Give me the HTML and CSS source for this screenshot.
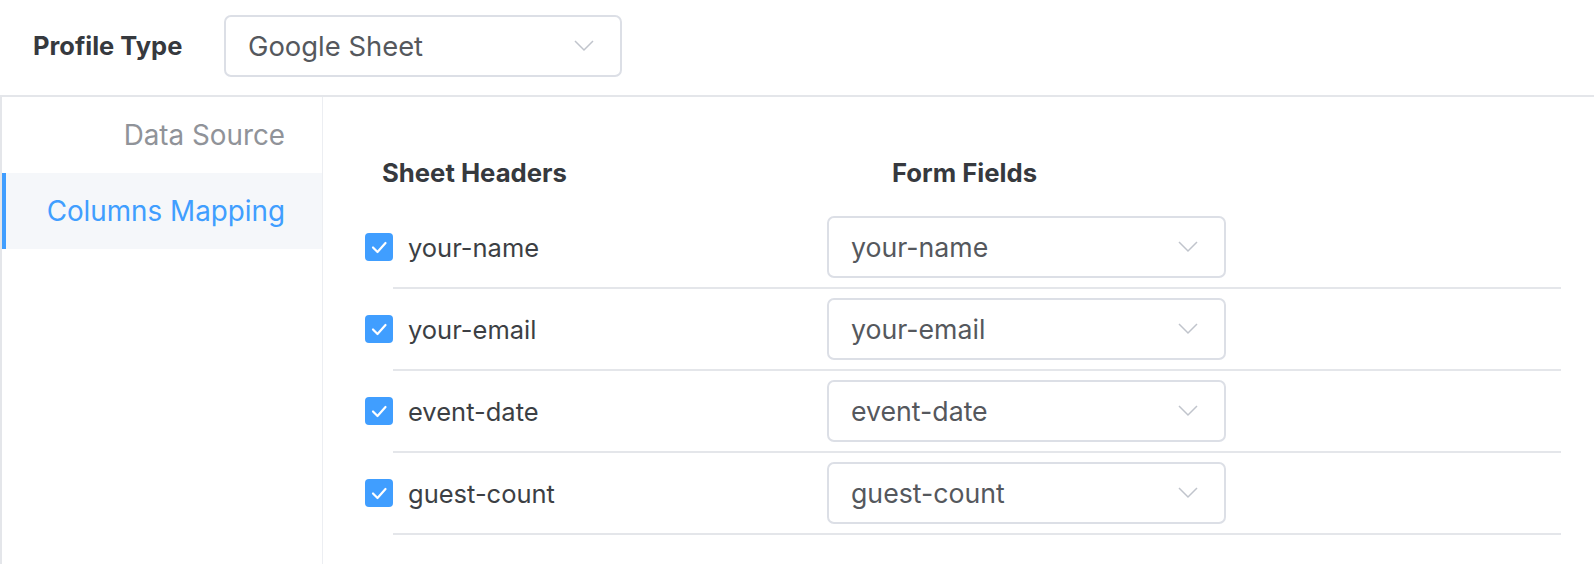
FILE: index.html
```html
<!DOCTYPE html>
<html lang="en">
<head>
<meta charset="utf-8">
<title>Profile Mapping</title>
<link rel="stylesheet" href="styles.css">
</head>
<body>
<div class="page">
  <header class="topbar">
    <label class="field-label">Profile Type</label>
    <div class="select select-profile">
      <span class="select-value value-lg">Google Sheet</span>
      <svg class="chevron" viewBox="0 0 20 12" width="20" height="12"><path d="M1 1 L10 10 L19 1" fill="none" stroke="#c0c4cc" stroke-width="1.5"/></svg>
    </div>
  </header>
  <main class="panel">
    <nav class="sidebar">
      <div class="nav-item">Data Source</div>
      <div class="nav-item active">Columns Mapping</div>
    </nav>
    <section class="content">
      <div class="head-row">
        <div class="head-cell head-sheet">Sheet Headers</div>
        <div class="head-cell head-form">Form Fields</div>
      </div>
      <div class="rows">
        <div class="row">
          <span class="check"><svg viewBox="0 0 28 28" width="28" height="28"><path d="M8 14.5 L12.5 19 L20.5 10" fill="none" stroke="#fff" stroke-width="2.2" stroke-linecap="round" stroke-linejoin="round"/></svg></span>
          <div class="row-body">
            <span class="row-name">your-name</span>
            <div class="select select-row">
              <span class="select-value">your-name</span>
              <svg class="chevron" viewBox="0 0 20 12" width="20" height="12"><path d="M1 1 L10 10 L19 1" fill="none" stroke="#c0c4cc" stroke-width="1.5"/></svg>
            </div>
          </div>
        </div>
        <div class="row">
          <span class="check"><svg viewBox="0 0 28 28" width="28" height="28"><path d="M8 14.5 L12.5 19 L20.5 10" fill="none" stroke="#fff" stroke-width="2.2" stroke-linecap="round" stroke-linejoin="round"/></svg></span>
          <div class="row-body">
            <span class="row-name">your-email</span>
            <div class="select select-row">
              <span class="select-value">your-email</span>
              <svg class="chevron" viewBox="0 0 20 12" width="20" height="12"><path d="M1 1 L10 10 L19 1" fill="none" stroke="#c0c4cc" stroke-width="1.5"/></svg>
            </div>
          </div>
        </div>
        <div class="row">
          <span class="check"><svg viewBox="0 0 28 28" width="28" height="28"><path d="M8 14.5 L12.5 19 L20.5 10" fill="none" stroke="#fff" stroke-width="2.2" stroke-linecap="round" stroke-linejoin="round"/></svg></span>
          <div class="row-body">
            <span class="row-name">event-date</span>
            <div class="select select-row">
              <span class="select-value">event-date</span>
              <svg class="chevron" viewBox="0 0 20 12" width="20" height="12"><path d="M1 1 L10 10 L19 1" fill="none" stroke="#c0c4cc" stroke-width="1.5"/></svg>
            </div>
          </div>
        </div>
        <div class="row">
          <span class="check"><svg viewBox="0 0 28 28" width="28" height="28"><path d="M8 14.5 L12.5 19 L20.5 10" fill="none" stroke="#fff" stroke-width="2.2" stroke-linecap="round" stroke-linejoin="round"/></svg></span>
          <div class="row-body">
            <span class="row-name">guest-count</span>
            <div class="select select-row">
              <span class="select-value">guest-count</span>
              <svg class="chevron" viewBox="0 0 20 12" width="20" height="12"><path d="M1 1 L10 10 L19 1" fill="none" stroke="#c0c4cc" stroke-width="1.5"/></svg>
            </div>
          </div>
        </div>
      </div>
    </section>
  </main>
</div>
</body>
</html>
```
FILE: styles.css
```css
* { box-sizing: border-box; }
html, body { margin: 0; padding: 0; background: #fff; }
body {
  font-family: Inter, "Liberation Sans", Arial, sans-serif;
  color: #3c3f44;
  width: 1594px;
  height: 564px;
  overflow: hidden;
}
.page { display: flex; flex-direction: column; height: 564px; }

.topbar {
  display: flex;
  align-items: center;
  height: 95px;
  padding: 0 0 4px 33px;
}
.field-label {
  font-size: 25.5px;
  font-weight: 700;
  color: #36393e;
  width: 191px;
}
.select {
  display: flex;
  align-items: center;
  justify-content: space-between;
  height: 62px;
  border: 2px solid #dcdfe6;
  border-radius: 7px;
  padding: 0 26px 0 22px;
  background: #fff;
}
.select-profile { width: 398px; }
.select-value { font-size: 26.7px; color: #55585d; }
.select-value.value-lg { font-size: 27.4px; }
.chevron { display: block; }

.panel {
  flex: 1;
  display: flex;
  border-top: 2px solid #e4e6ea;
  border-left: 2px solid #e4e6ea;
}
.sidebar {
  width: 321px;
  border-right: 1px solid #eceef2;
}
.nav-item {
  height: 76px;
  display: flex;
  align-items: center;
  justify-content: flex-end;
  padding-right: 37px;
  font-size: 27.8px;
  color: #909399;
}
.nav-item.active {
  background: #f5f7fa;
  color: #409eff;
  border-left: 4px solid #409eff;
}

.content {
  flex: 1;
  padding: 58px 0 0 42px;
}
.head-row {
  display: flex;
  align-items: center;
  height: 34px;
  margin-bottom: 18px;
}
.head-cell {
  font-size: 25.7px;
  font-weight: 700;
  color: #36393e;
}
.head-sheet { width: 527px; padding-left: 17px; }

.rows { width: 1196px; }
.row {
  display: flex;
  align-items: center;
  height: 82px;
}
.check {
  width: 28px;
  height: 28px;
  border-radius: 4px;
  background: #409eff;
  flex: none;
  margin-top: -2px;
}
.check svg { display: block; }
.row-body {
  flex: 1;
  height: 82px;
  display: flex;
  align-items: center;
  border-bottom: 2px solid #e4e6ea;
  padding-left: 15px;
}
.row-name {
  width: 419px;
  font-size: 25.5px;
  color: #3c3f44;
}
.select-row { width: 399px; }
```
